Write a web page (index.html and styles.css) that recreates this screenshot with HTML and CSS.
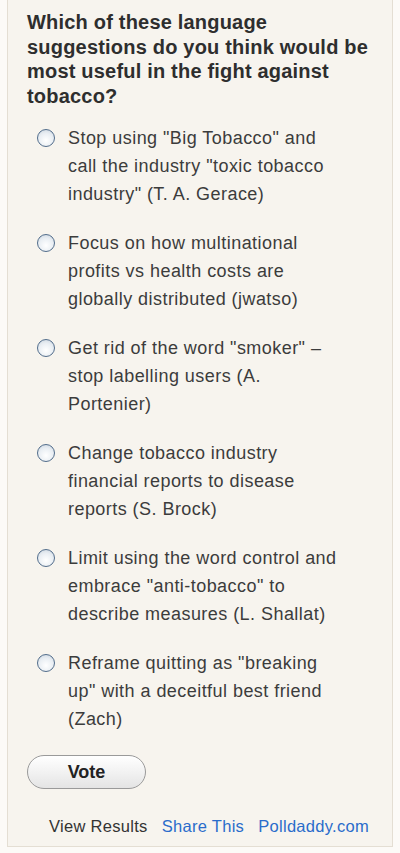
FILE: index.html
```html
<!DOCTYPE html>
<html lang="en">
<head>
    <meta charset="UTF-8">
    <meta name="viewport" content="width=device-width, initial-scale=1.0">
    <title>Poll</title>
    <link rel="stylesheet" href="styles.css">
</head>
<body>

<div class="poll">
    <h2 class="poll-question">Which of these language suggestions do you think would be most useful in the fight against tobacco?</h2>

    <ul class="poll-answers">
        <li><label><input type="radio" name="answer"><span>Stop using "Big Tobacco" and call the industry "toxic tobacco industry" (T. A. Gerace)</span></label></li>
        <li><label><input type="radio" name="answer"><span>Focus on how multinational profits vs health costs are globally distributed (jwatso)</span></label></li>
        <li><label><input type="radio" name="answer"><span>Get rid of the word "smoker" &ndash; stop labelling users (A. Portenier)</span></label></li>
        <li><label><input type="radio" name="answer"><span>Change tobacco industry financial reports to disease reports (S. Brock)</span></label></li>
        <li><label><input type="radio" name="answer"><span>Limit using the word control and embrace "anti-tobacco" to describe measures (L. Shallat)</span></label></li>
        <li><label><input type="radio" name="answer"><span>Reframe quitting as "breaking up" with a deceitful best friend (Zach)</span></label></li>
    </ul>

    <button class="vote-btn">Vote</button>

    <div class="poll-links">
        <span>View Results</span>
        <a href="#">Share This</a>
        <a href="#">Polldaddy.com</a>
    </div>
</div>

</body>
</html>
```

FILE: styles.css
```css
body {
    margin: 0;
    background-color: #fcfaf7;
    font-family: "Liberation Sans", Arial, sans-serif;
}
.poll {
    margin-left: 7px;
    width: 386px;
    border: 1px solid #e4ded3;
    border-top: none;
    background-color: #f7f4ee;
    padding: 10px 0 10px 19px;
    box-sizing: border-box;
}
.poll-question {
    margin: 0;
    width: 350px;
    font-size: 20px;
    line-height: 24.5px;
    letter-spacing: 0.2px;
    font-weight: bold;
    color: #2e2e2e;
}
.poll-answers {
    list-style: none;
    margin: 16px 0 0 0;
    padding: 0 0 0 10px;
}
.poll-answers li {
    margin-bottom: 21px;
}
.poll-answers label {
    display: flex;
    align-items: flex-start;
    gap: 13px;
}
.poll-answers span {
    width: 280px;
    font-size: 18px;
    line-height: 28px;
    letter-spacing: 0.45px;
    color: #3c3c3c;
}
.poll-answers input {
    appearance: none;
    -webkit-appearance: none;
    flex: none;
    width: 18px;
    height: 18px;
    margin: 5px 0 0 0;
    border: 1.5px solid #526d8b;
    border-radius: 50%;
    background: radial-gradient(circle at 50% 65%, #ffffff 0%, #e9eef3 55%, #c6d1dd 100%);
    box-sizing: border-box;
}
.vote-btn {
    display: block;
    margin-top: 22px;
    width: 119px;
    height: 34px;
    border: 1px solid #9a9a9a;
    border-radius: 17px;
    background: linear-gradient(#ffffff, #f2f2f2 50%, #e4e4e4);
    font-family: "Liberation Sans", Arial, sans-serif;
    font-size: 18px;
    font-weight: bold;
    color: #222;
    cursor: pointer;
}
.poll-links {
    margin-top: 27px;
    padding-left: 22px;
    display: flex;
    gap: 14px;
    font-size: 16.5px;
    line-height: 20px;
    letter-spacing: 0.3px;
    color: #333;
}
.poll-links a {
    color: #2a6ccb;
    text-decoration: none;
}
```
